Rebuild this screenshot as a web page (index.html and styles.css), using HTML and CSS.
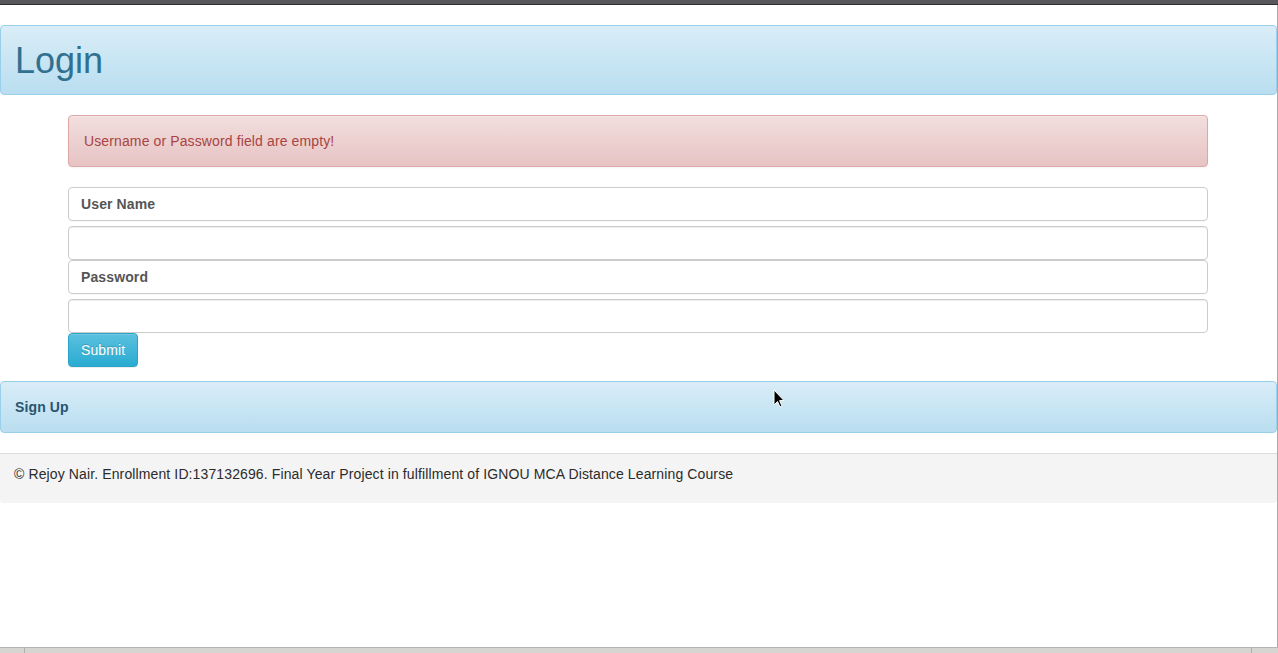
FILE: index.html
```html
<!DOCTYPE html>
<html>
<head>
<meta charset="utf-8">
<title>Login</title>
<link rel="stylesheet" href="styles.css">
</head>
<body>
<div class="topbar"></div>
<div class="frame">
  <main class="page">
    <div class="panel panel-title">
      <h1 class="panel-heading-lg">Login</h1>
    </div>
    <div class="container">
      <div class="alert">Username or Password field are empty!</div>
      <form class="login-form">
        <label class="field-label">User Name</label>
        <input class="field-input field-after-label" type="text">
        <label class="field-label">Password</label>
        <input class="field-input field-after-label" type="password">
        <button class="btn-submit" type="button">Submit</button>
      </form>
    </div>
    <div class="panel panel-signup">
      <div class="panel-heading-sm">Sign Up</div>
    </div>
    <footer class="footer">© Rejoy Nair. Enrollment ID:137132696. Final Year Project in fulfillment of IGNOU MCA Distance Learning Course</footer>
  </main>
  <svg class="cursor" width="12" height="19" viewBox="0 0 12 19">
    <path d="M1 1 L1 16 L4.5 12.5 L7 18 L9 17 L6.6 11.6 L11 11.6 Z" fill="#000" stroke="#fff" stroke-width="1"/>
  </svg>
</div>
<div class="hscroll">
  <div class="hscroll-btn"></div>
  <div class="hscroll-track"></div>
  <div class="hscroll-btn"></div>
</div>
</body>
</html>
```
FILE: styles.css
```css
html, body {
  margin: 0;
  padding: 0;
}
body {
  width: 1278px;
  height: 653px;
  overflow: hidden;
  display: flex;
  flex-direction: column;
  background: #fff;
  font-family: "Liberation Sans", Arial, sans-serif;
  font-size: 14px;
  line-height: 20px;
  letter-spacing: 0.12px;
  color: #333;
}
.topbar {
  height: 4px;
  background: #58585c;
  border-bottom: 1px solid #2e2e30;
  flex: none;
}
.frame {
  flex: 1;
  position: relative;
  border-right: 1px solid #a8a8a8;
  min-height: 0;
}
.page {
  padding-top: 20px;
}
.panel {
  border: 1px solid #9acfea;
  border-radius: 4px;
  background-image: linear-gradient(to bottom, #d9edf7 0%, #b9def0 100%);
  color: #31708f;
}
.panel-title {
  height: 68px;
  display: flex;
  align-items: center;
}
.panel-heading-lg {
  margin: 0;
  padding: 2px 14px 0;
  font-size: 36px;
  font-weight: 400;
  line-height: 40px;
  letter-spacing: 0;
  color: #31708f;
}
.container {
  width: 1140px;
  margin: 20px 0 0 68px;
}
.alert {
  box-sizing: border-box;
  height: 52px;
  padding: 15px;
  border: 1px solid #dca7a7;
  border-radius: 4px;
  background-image: linear-gradient(to bottom, #f2dede 0%, #e7c3c3 100%);
  color: #a94442;
  box-shadow: inset 0 1px 0 rgba(255,255,255,.25), 0 1px 2px rgba(0,0,0,.05);
}
.login-form {
  display: flex;
  flex-direction: column;
  align-items: flex-start;
  margin-top: 20px;
}
.field-label {
  box-sizing: border-box;
  width: 100%;
  height: 34px;
  padding: 6px 12px;
  border: 1px solid #ccc;
  border-radius: 4px;
  font-weight: 700;
  color: #555;
  box-shadow: 0 1px 1px rgba(0,0,0,.03);
}
.field-input {
  box-sizing: border-box;
  width: 100%;
  height: 34px;
  margin: 5px 0 0;
  padding: 6px 12px;
  border: 1px solid #ccc;
  border-radius: 4px;
  background: #fff;
  font: inherit;
  box-shadow: inset 0 1px 1px rgba(0,0,0,.075);
  outline: none;
}
.btn-submit {
  box-sizing: border-box;
  width: 70px;
  height: 34px;
  padding: 6px 12px;
  border: 1px solid #28a4c9;
  border-radius: 4px;
  background-image: linear-gradient(to bottom, #5bc0de 0%, #2aabd2 100%);
  color: #fff;
  font: inherit;
  letter-spacing: 0.12px;
  text-shadow: 0 -1px 0 rgba(0,0,0,.2);
  box-shadow: inset 0 1px 0 rgba(255,255,255,.15), 0 1px 1px rgba(0,0,0,.075);
}
.panel-signup {
  margin-top: 14px;
  height: 50px;
  display: flex;
  align-items: center;
}
.panel-heading-sm {
  padding: 0 14px;
  font-weight: 700;
  color: #28546f;
}
.footer {
  margin-top: 20px;
  box-sizing: border-box;
  height: 50px;
  padding: 10px 14px 0;
  background: #f4f4f4;
  border-top: 1px solid #dcdcdc;
  color: #2b2b2b;
  border-radius: 0 0 4px 4px;
}
.cursor {
  position: absolute;
  left: 773px;
  top: 384px;
}
.hscroll {
  flex: none;
  height: 5px;
  display: flex;
  background: #d6d5d2;
  border-top: 1px solid #b5b5b5;
}
.hscroll-btn {
  width: 24px;
  border-right: 1px solid #b0b0b0;
}
.hscroll-btn:last-child {
  border-right: none;
  border-left: 1px solid #b0b0b0;
  width: 26px;
}
.hscroll-track {
  flex: 1;
}
```
